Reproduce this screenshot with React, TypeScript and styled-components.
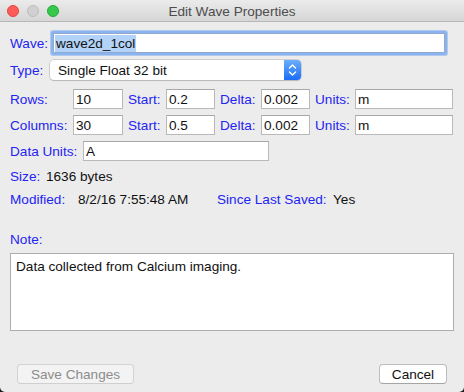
import styled, { createGlobalStyle } from 'styled-components';

const GlobalStyle = createGlobalStyle`
  html, body {
    margin: 0;
    padding: 0;
    background: #1a1a1a;
  }
  body {
    font-family: "Liberation Sans", Arial, Helvetica, sans-serif;
    font-size: 13.6px;
    -webkit-font-smoothing: antialiased;
  }
`;

const Window = styled.div`
  width: 464px;
  height: 392px;
  background: #ececec;
  border-radius: 0 0 5px 5px;
  overflow: hidden;
  display: flex;
  flex-direction: column;
`;

const TitleBar = styled.div`
  height: 21px;
  flex-shrink: 0;
  display: grid;
  grid-template-columns: 1fr auto 1fr;
  align-items: center;
  background: linear-gradient(#ebebeb, #d6d6d6);
  border-bottom: 1px solid #b8b8b8;
`;

const Lights = styled.div`
  display: flex;
  gap: 8px;
  padding-left: 7px;
  padding-top: 1px;
`;

const Light = styled.span<{ $color: string; $edge: string }>`
  width: 12px;
  height: 12px;
  box-sizing: border-box;
  border-radius: 50%;
  background: ${(p) => p.$color};
  border: 1px solid ${(p) => p.$edge};
`;

const Title = styled.div`
  color: #4d4d4d;
  font-size: 13.6px;
  padding-top: 1px;
`;

const Body = styled.div`
  flex: 1;
  display: flex;
  flex-direction: column;
  padding: 0 10px;
`;

const Row = styled.div<{ $top: number }>`
  display: flex;
  align-items: center;
  height: 20px;
  margin-top: ${(p) => p.$top}px;
`;

const Label = styled.span<{ $width?: number }>`
  color: #2424f2;
  white-space: nowrap;
  width: ${(p) => (p.$width ? `${p.$width}px` : 'auto')};
  flex-shrink: 0;
`;

const Value = styled.span<{ $width?: number }>`
  color: #111;
  white-space: nowrap;
  width: ${(p) => (p.$width ? `${p.$width}px` : 'auto')};
  flex-shrink: 0;
`;

const Field = styled.div<{ $width: number }>`
  width: ${(p) => p.$width}px;
  height: 20px;
  box-sizing: border-box;
  background: #fff;
  border: 1px solid #b9b9b9;
  border-top-color: #a8a8a8;
  padding-left: 2px;
  display: flex;
  align-items: center;
  color: #111;
  flex-shrink: 0;
`;

const FocusField = styled(Field)`
  margin-left: 6px;
  border-color: #8fa9d0;
  box-shadow: 0 0 0 2px #8ab4f0, 0 0 0 3px rgba(120, 165, 235, 0.5);
  border-radius: 1px;
  padding-left: 1px;
`;

const Selected = styled.span`
  background: #b2d2f7;
  padding: 1px 1px;
`;

const Grid = styled.div<{ $top: number }>`
  display: grid;
  grid-template-columns: 63px 50px 43px 49px 46px 49px 45px 98px;
  align-items: center;
  height: 20px;
  margin-top: ${(p) => p.$top}px;
`;

const GridLabel = styled.span<{ $inset?: boolean }>`
  color: #2424f2;
  white-space: nowrap;
  padding-left: ${(p) => (p.$inset ? '5px' : '0')};
`;

const GridField = styled.div`
  height: 20px;
  box-sizing: border-box;
  background: #fff;
  border: 1px solid #b9b9b9;
  border-top-color: #a8a8a8;
  padding-left: 2px;
  display: flex;
  align-items: center;
  color: #111;
`;

const Select = styled.div`
  margin-left: 4px;
  width: 251px;
  height: 20px;
  box-sizing: border-box;
  background: #fff;
  border-radius: 4px;
  box-shadow: 0 0 0 0.5px #b0b0b0, 0 1px 1px rgba(0, 0, 0, 0.18);
  display: flex;
  align-items: center;
  justify-content: space-between;
  overflow: hidden;
`;

const SelectText = styled.span`
  padding-left: 8px;
  color: #111;
`;

const Stepper = styled.div`
  width: 17px;
  height: 20px;
  background: linear-gradient(#69aefc, #1b6ef6);
  display: flex;
  align-items: center;
  justify-content: center;
`;

const NoteBox = styled.div`
  margin-top: 4px;
  height: 78px;
  background: #fff;
  border: 1px solid #adadad;
  padding: 5px 5px;
  box-sizing: border-box;
  color: #111;
  line-height: 16px;
`;

const Footer = styled.div`
  display: flex;
  justify-content: space-between;
  padding: 0 7px;
  margin-top: 33px;
`;

const Button = styled.div<{ $disabled?: boolean; $width: number }>`
  width: ${(p) => p.$width}px;
  height: 20px;
  box-sizing: border-box;
  display: flex;
  align-items: center;
  justify-content: center;
  border-radius: 4px;
  background: ${(p) => (p.$disabled ? '#f3f3f3' : '#fff')};
  border: 1px solid ${(p) => (p.$disabled ? '#d3d3d3' : '#bdbdbd')};
  border-bottom-color: ${(p) => (p.$disabled ? '#cfcfcf' : '#a5a5a5')};
  color: ${(p) => (p.$disabled ? '#8c8c8c' : '#111')};
`;

export default function App() {
  return (
    <Window>
      <GlobalStyle />
      <TitleBar>
        <Lights>
          <Light $color="#fc5b57" $edge="#e2463f" />
          <Light $color="#d0d0d0" $edge="#bcbcbc" />
          <Light $color="#35c84a" $edge="#24a93a" />
        </Lights>
        <Title>Edit Wave Properties</Title>
        <span />
      </TitleBar>
      <Body>
        <Row $top={11}>
          <Label $width={37}>Wave:</Label>
          <FocusField $width={392}>
            <Selected>wave2d_1col</Selected>
          </FocusField>
        </Row>
        <Row $top={7}>
          <Label $width={36}>Type:</Label>
          <Select>
            <SelectText>Single Float 32 bit</SelectText>
            <Stepper>
              <svg width="9" height="14" viewBox="0 0 9 14" fill="none" stroke="#fff" strokeWidth="1.4" strokeLinecap="round" strokeLinejoin="round">
                <path d="M1.5 5 L4.5 2 L7.5 5" />
                <path d="M1.5 9 L4.5 12 L7.5 9" />
              </svg>
            </Stepper>
          </Select>
        </Row>
        <Grid $top={9}>
          <GridLabel>Rows:</GridLabel>
          <GridField>10</GridField>
          <GridLabel $inset>Start:</GridLabel>
          <GridField>0.2</GridField>
          <GridLabel $inset>Delta:</GridLabel>
          <GridField>0.002</GridField>
          <GridLabel $inset>Units:</GridLabel>
          <GridField>m</GridField>
        </Grid>
        <Grid $top={6}>
          <GridLabel>Columns:</GridLabel>
          <GridField>30</GridField>
          <GridLabel $inset>Start:</GridLabel>
          <GridField>0.5</GridField>
          <GridLabel $inset>Delta:</GridLabel>
          <GridField>0.002</GridField>
          <GridLabel $inset>Units:</GridLabel>
          <GridField>m</GridField>
        </Grid>
        <Row $top={6}>
          <Label $width={73}>Data Units:</Label>
          <Field $width={186}>A</Field>
        </Row>
        <Row $top={5}>
          <Label $width={36}>Size:</Label>
          <Value>1636 bytes</Value>
        </Row>
        <Row $top={3}>
          <Label $width={68}>Modified:</Label>
          <Value $width={139}>8/2/16 7:55:48 AM</Value>
          <Label $width={116}>Since Last Saved:</Label>
          <Value>Yes</Value>
        </Row>
        <Row $top={20}>
          <Label>Note:</Label>
        </Row>
        <NoteBox>Data collected from Calcium imaging.</NoteBox>
        <Footer>
          <Button $disabled $width={117}>Save Changes</Button>
          <Button $width={68}>Cancel</Button>
        </Footer>
      </Body>
    </Window>
  );
}
